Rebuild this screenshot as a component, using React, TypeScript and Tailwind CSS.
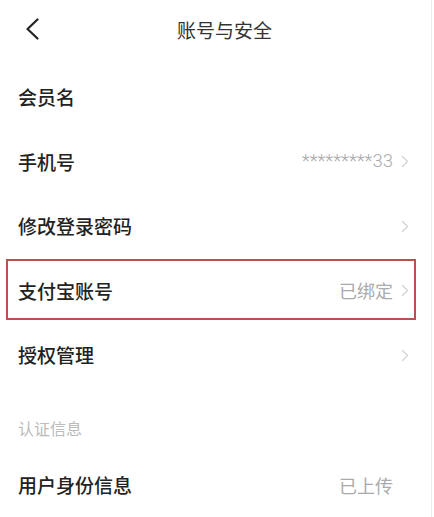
import React from 'react';

type Row = {
  label: string;
  value?: string;
  arrow?: boolean;
  mono?: boolean;
  marked?: boolean;
};

const rows: Row[] = [
  { label: '会员名' },
  { label: '手机号', value: '*********33', arrow: true, mono: true },
  { label: '修改登录密码', arrow: true },
  { label: '支付宝账号', value: '已绑定', arrow: true, marked: true },
  { label: '授权管理', arrow: true },
];

const Chevron: React.FC<{ hidden?: boolean }> = ({ hidden }) => (
  <svg
    width="8"
    height="13"
    viewBox="0 0 8 13"
    className={hidden ? 'invisible' : ''}
  >
    <path
      d="M1.5 1.5 L6.5 6.5 L1.5 11.5"
      fill="none"
      stroke="#d4d4d4"
      strokeWidth="1.4"
      strokeLinecap="round"
      strokeLinejoin="round"
    />
  </svg>
);

const ListRow: React.FC<{ row: Row; h: string }> = ({ row, h }) => (
  <div className={`relative flex items-center justify-between pl-[18px] pr-[22px] ${h}`}>
    <span className="text-[19px] font-medium text-[#222]">{row.label}</span>
    <div className="flex items-center gap-[8px]">
      {row.value && (
        <span
          className={
            row.mono
              ? "font-['Roboto',sans-serif] text-[18.5px] font-light text-[#aaa]"
              : 'text-[18px] text-[#aaa]'
          }
        >
          {row.value}
        </span>
      )}
      <Chevron hidden={!row.arrow} />
    </div>
    {row.marked && (
      <div className="pointer-events-none absolute top-[0.5px] bottom-[3px] left-[6px] right-[15px] border-[2.5px] border-[#b9514f]" />
    )}
  </div>
);

const App: React.FC = () => {
  return (
    <div className="h-[517px] w-[434px] overflow-hidden bg-white font-['Noto_Sans_CJK_SC','Noto_Sans',sans-serif]">
      <div className="h-full w-[432px] border-r border-[#ececec]">
        <header className="relative flex h-[60px] items-center justify-center pl-[18px]">
          <svg
            className="absolute left-[25px] top-[18px]"
            width="15"
            height="22"
            viewBox="0 0 15 22"
          >
            <path
              d="M12.5 1.5 L2.5 11 L12.5 20.5"
              fill="none"
              stroke="#222"
              strokeWidth="2.2"
              strokeLinecap="round"
              strokeLinejoin="round"
            />
          </svg>
          <h1 className="text-[19px] font-normal text-[#333]">账号与安全</h1>
        </header>
        <div className="mt-[5px]">
          {rows.map((row) => (
            <ListRow key={row.label} row={row} h="h-[64.5px]" />
          ))}
        </div>
        <div className="h-[67.5px] pl-[18px] pt-[28px]">
          <span className="text-[16px] leading-[20px] text-[#bbb]">认证信息</span>
        </div>
        <ListRow row={{ label: '用户身份信息', value: '已上传' }} h="h-[60px]" />
      </div>
    </div>
  );
};

export default App;
